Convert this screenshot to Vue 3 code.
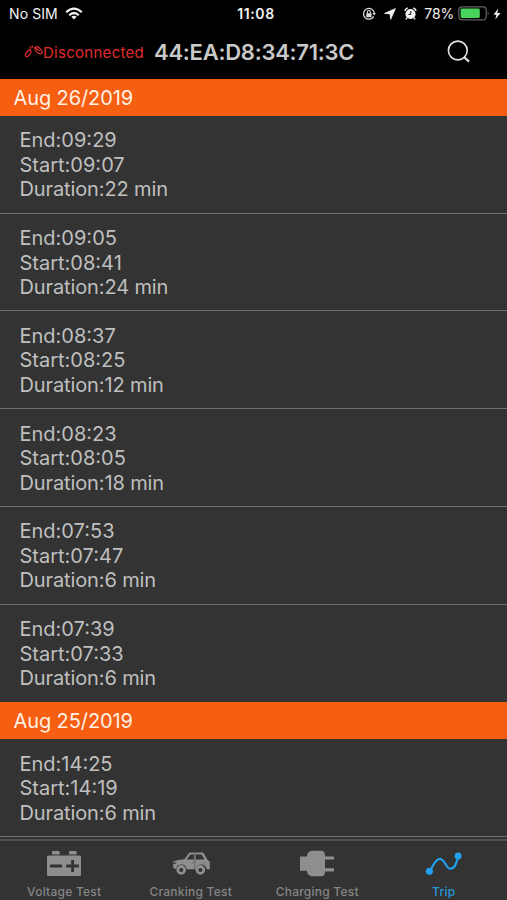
<script setup>
const groups = [
  {
    date: 'Aug 26/2019',
    trips: [
      { end: '09:29', start: '09:07', duration: 22 },
      { end: '09:05', start: '08:41', duration: 24 },
      { end: '08:37', start: '08:25', duration: 12 },
      { end: '08:23', start: '08:05', duration: 18 },
      { end: '07:53', start: '07:47', duration: 6 },
      { end: '07:39', start: '07:33', duration: 6 },
    ],
  },
  { date: 'Aug 25/2019', trips: [{ end: '14:25', start: '14:19', duration: 6 }] },
]
</script>

<template>
  <div class="screen">
    <header class="top">
      <div class="status">
        <div class="carrier">
          <span>No SIM</span>
          <svg class="wifi" width="18" height="13" viewBox="0 0 18 13">
            <g fill="none" stroke="#f2f2f2" stroke-width="2.2">
              <path d="M1.2 5.2Q9-2 16.8 5.2" />
              <path d="M4.2 8.2Q9 3.8 13.8 8.2" />
            </g>
            <path d="M6.3 9.8Q9 7.6 11.7 9.8L9 12.6Z" fill="#f2f2f2" />
          </svg>
        </div>
        <span class="clock">11:08</span>
        <div class="indicators">
          <svg class="lock" width="14" height="14" viewBox="0 0 14 14">
            <path d="M11.7 9.4A5.4 5.4 0 1 1 12.3 6" fill="none" stroke="#ddd" stroke-width="1.2" />
            <path d="M10.4 6h3.5l-1.7 2.5z" fill="#ddd" />
            <path d="M4.3 6.2h5.2v4H4.3z" fill="#ddd" />
            <path d="M5.4 6.4V5a1.5 1.5 0 0 1 3 0v1.4" fill="none" stroke="#ddd" stroke-width="1.1" />
          </svg>
          <svg class="location" width="12" height="12" viewBox="0 0 12 12">
            <path d="M11.4.6L6.7 11.3 6.1 5.9.6 5.4z" fill="#f2f2f2" stroke="#f2f2f2" stroke-width=".8" stroke-linejoin="round" />
          </svg>
          <svg class="alarm" width="13" height="13" viewBox="0 0 13 13">
            <circle cx="6.5" cy="7" r="5.1" fill="#f2f2f2" />
            <path d="M.9 3.8Q1.4 1.4 3.8.9M9.2.9Q11.6 1.4 12.1 3.8M3 11l-1.1 1.4M10 11l1.1 1.4" fill="none" stroke="#f2f2f2" stroke-width="1.5" />
            <path d="M6.8 4v3.4H4.4" fill="none" stroke="#111" stroke-width="1" />
          </svg>
          <span class="percent">78%</span>
          <svg class="battery" width="32" height="15" viewBox="0 0 32 15">
            <rect x=".8" y=".8" width="27.4" height="13" rx="3.4" fill="none" stroke="#626262" stroke-width="1.2" />
            <rect x="2.6" y="2.6" width="19.2" height="9.4" rx="1.4" fill="#47d35c" />
            <path d="M29.7 5q2 2.3 0 4.6z" fill="#626262" />
          </svg>
          <svg class="bolt" width="8" height="12" viewBox="0 0 8 12">
            <path d="M5.2.5L.5 6.8h2.9L2.3 11.5 7.5 5H4.3z" fill="#f2f2f2" />
          </svg>
        </div>
      </div>
      <div class="nav">
        <div class="connection">
          <svg width="20" height="14" viewBox="0 0 20 14" fill="none" stroke="#e02b2e" stroke-width="1.25" stroke-linecap="round">
            <path d="M6.7 5.2Q4.8 4.4 3 6.8 .5 10 1.8 11.3 3.4 12.6 5.8 9.4 7.6 7 6.7 5.2" />
            <path d="M11 2.2Q13.3.6 16 3.5 19 6.6 17.8 8.3 16.3 9.8 13 7.2 10.3 4.8 11 2.2M11.2 2.4l3.9 3.3M5.9 2.1l.9 1.2M8.2.8v1.7" />
          </svg>
          <span>Disconnected</span>
        </div>
        <h1>44:EA:D8:34:71:3C</h1>
        <svg class="search" width="24" height="24" viewBox="0 0 24 24" fill="none" stroke="#e4e4e4">
          <circle cx="10.8" cy="10.5" r="9.4" stroke-width="1.6" />
          <path d="M17 17l5 4.6" stroke-width="2.2" />
        </svg>
      </div>
    </header>

    <main>
      <section v-for="group in groups" :key="group.date">
        <h2><span>{{ group.date }}</span></h2>
        <ul>
          <li v-for="trip in group.trips" :key="trip.end">
            <p><span>End:{{ trip.end }}</span></p>
            <p><span>Start:{{ trip.start }}</span></p>
            <p><span class="duration">Duration:{{ trip.duration }} min</span></p>
          </li>
        </ul>
      </section>
    </main>

    <nav class="tabs">
      <div class="tab">
        <svg width="36" height="28" viewBox="0 0 36 28">
          <path d="M6 4.5V2.3Q6 1 7.3 1h5q1.3 0 1.3 1.3v2.2zM23 4.5V2.3Q23 1 24.3 1h5q1.3 0 1.3 1.3v2.2z" fill="#8e8e8e" />
          <rect x="1" y="5.5" width="34" height="20.5" rx="1.5" fill="#8e8e8e" />
          <path d="M4 16h12M20.2 16h12.6M26.6 10v12" stroke="#333" stroke-width="2.8" />
        </svg>
        <span>Voltage Test</span>
      </div>
      <div class="tab">
        <svg width="38" height="28" viewBox="0 0 38 28">
          <path d="M.7 11.4l5-1.5 6.1-.7 5.1-6.6h13.9l4 7 2.5 2.2v7.4h-3.1a5.4 5.4 0 0 0-10.7 0h-9.3a5.4 5.4 0 0 0-10.7 0L.7 17.7v-4h3v-1.1h-3z" transform="translate(.5)" fill="#8e8e8e" />
          <path d="M18.6 4.4h3.3v5h-7.2zM23.7 4.4h5.8l3 5h-8.8z" fill="#333" />
          <path d="M22.8 3v15.8M20.3 12.5h1.5M31.2 12.5h1.6" stroke="#666" />
          <g fill="none" stroke="#8e8e8e" stroke-width="2.8">
            <circle cx="9.2" cy="19.9" r="3.4" />
            <circle cx="28.4" cy="19.9" r="3.4" />
          </g>
        </svg>
        <span>Cranking Test</span>
      </div>
      <div class="tab">
        <svg width="36" height="28" viewBox="0 0 36 28">
          <path d="M1 6.5h7C8 3 10.2.7 13.5.7h8.7c2.4 0 3.8 2 3.8 4.4v1.3h9v3.2h-9v8.6h9v3.3h-9v.8c0 2.5-1.5 4-3.8 4h-8.7c-3.3 0-5.5-2.3-5.5-5.5H1z" fill="#8e8e8e" />
        </svg>
        <span>Charging Test</span>
      </div>
      <div class="tab active">
        <svg width="38" height="28" viewBox="0 0 38 28">
          <path d="M4.8 21.5C8.5 14 12.5 7 16.5 9.3c4.7 2.8 4.6 9.8 9.3 9.5 4.7-.3 5.7-6.5 7.4-12.3" fill="none" stroke="#20a0ed" stroke-width="2.1" />
          <circle cx="4.4" cy="21.3" r="3.5" fill="#20a0ed" />
          <circle cx="33.1" cy="6" r="3.5" fill="#20a0ed" />
        </svg>
        <span>Trip</span>
      </div>
    </nav>
  </div>
</template>

<style>
body {
  margin: 0;
  background: #333;
}
</style>

<style scoped>
.screen {
  display: flex;
  flex-direction: column;
  width: 507px;
  height: 900px;
  overflow: hidden;
  background: #333;
  color: #bfbfbf;
  font-family: Inter, "Liberation Sans", sans-serif;
}
h1, h2, p, ul {
  margin: 0;
  padding: 0;
  font-weight: 400;
}
svg {
  display: block;
  flex: none;
}
.top {
  flex: none;
  height: 79px;
  background: #000;
}
.status {
  display: grid;
  grid-template-columns: 1fr auto 1fr;
  align-items: center;
  height: 27px;
  padding: 0 6px 0 9px;
  color: #f2f2f2;
  font-size: 14px;
}
.carrier {
  display: flex;
  align-items: center;
  gap: 7px;
  letter-spacing: .1px;
}
.clock {
  padding-left: 2px;
  font-size: 14px;
  font-weight: 600;
  letter-spacing: .6px;
}
.indicators {
  display: flex;
  align-items: center;
  justify-content: flex-end;
}
.location { margin-left: 8px; }
.alarm { margin-left: 8px; }
.percent {
  margin-left: 7px;
  letter-spacing: -.15px;
}
.battery { margin-left: 4px; }
.bolt { margin-left: 3px; }
.nav {
  display: flex;
  align-items: center;
  height: 50px;
  padding: 0 36px 0 24px;
  white-space: nowrap;
}
.connection {
  display: flex;
  align-items: center;
  width: 130px;
  color: #e02b2e;
  font-size: 15px;
  letter-spacing: .28px;
}
.connection span { margin-left: -1px; }
.nav h1 {
  color: #c9c9c9;
  font-size: 22px;
  font-weight: 600;
  letter-spacing: -.25px;
}
.search { margin-left: auto; }
h2 {
  display: flex;
  align-items: center;
  box-sizing: border-box;
  height: 36.75px;
  padding: 1.5px 0 0 13.5px;
  background: #f65e12;
  color: #fff0e4;
  font-size: 20px;
  letter-spacing: -.1px;
}
ul { list-style: none; }
li {
  box-sizing: border-box;
  height: 97.75px;
  padding: 12.5px 20px 0 19.5px;
  border-bottom: 1px solid #717171;
  font-size: 20px;
  line-height: 24.6px;
}
.duration { letter-spacing: -.12px; }
section:first-child li:last-child { border-bottom-color: transparent; }
main {
  flex: none;
  height: 760px;
}
.tabs {
  display: grid;
  grid-template-columns: repeat(4, 1fr);
  flex: 1;
  padding-left: 1px;
  border-top: 2px solid #505050;
}
.tab {
  display: flex;
  flex-direction: column;
  align-items: center;
  padding-top: 9px;
  color: #858585;
  font-size: 12px;
  font-weight: 500;
  letter-spacing: .24px;
}
.tab span {
  margin-top: 6px;
  line-height: 16px;
}
.active { color: #2898dc; }
</style>
